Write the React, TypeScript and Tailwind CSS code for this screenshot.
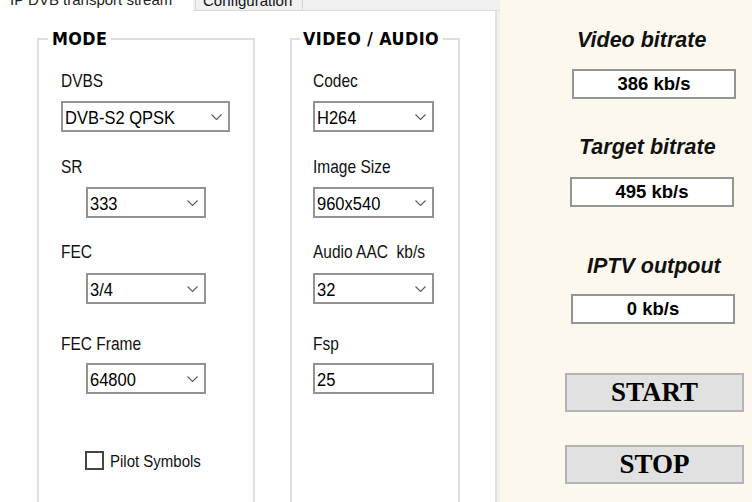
import React from "react";

const Chevron = () => (
  <svg width="11" height="6" viewBox="0 0 11 6" className="shrink-0">
    <path d="M0.5 0.5 L5.5 5.5 L10.5 0.5" fill="none" stroke="#5a5a5a" strokeWidth="1.1" />
  </svg>
);

function Label({ children, className = "" }: { children: React.ReactNode; className?: string }) {
  return (
    <div className={"h-[18px] whitespace-pre text-[15.5px] leading-[18px] text-[#111] " + className}>
      <span className="inline-block scale-y-115">{children}</span>
    </div>
  );
}

function Combo({ value, className = "", arrow = true }: { value: string; className?: string; arrow?: boolean }) {
  return (
    <div
      className={
        "flex h-[31px] shrink-0 items-center justify-between border-2 border-[#939393] bg-white pr-[6px] pl-[2px] " +
        className
      }
    >
      <span className="inline-block scale-y-115 text-[16.5px] leading-[20px] text-black">{value}</span>
      {arrow && <Chevron />}
    </div>
  );
}

function Group({
  title,
  children,
  className = "",
  titleClass = "",
}: {
  title: string;
  children: React.ReactNode;
  className?: string;
  titleClass?: string;
}) {
  return (
    <div className={"relative h-[480px] shrink-0 border-2 border-[#dedede] pt-[32px] " + className}>
      <div
        className={
          "absolute -top-[11px] bg-white font-['DejaVu_Sans',sans-serif] text-[16px] leading-[20px] font-bold tracking-[0.4px] whitespace-nowrap text-black " +
          titleClass
        }
      >
        <span className="inline-block scale-y-115">{title}</span>
      </div>
      <div className="flex flex-col">{children}</div>
    </div>
  );
}

function ValueBox({ value, className = "" }: { value: string; className?: string }) {
  return (
    <div
      className={
        "flex h-[30px] w-[164px] items-center justify-center border-2 border-[#959595] bg-white text-[18.5px] font-bold text-black " +
        className
      }
    >
      {value}
    </div>
  );
}

function ItalicLabel({ children, className = "" }: { children: React.ReactNode; className?: string }) {
  return (
    <div className={"h-[24px] text-[21.5px] leading-[24px] font-bold whitespace-nowrap text-[#111] italic " + className}>
      {children}
    </div>
  );
}

function BigButton({ children, className = "" }: { children: React.ReactNode; className?: string }) {
  return (
    <div
      className={
        "flex h-[39px] w-[179px] items-center justify-center border-2 border-[#b4b4b4] bg-[#e1e1e1] font-['Liberation_Serif',serif] text-[27px] font-bold text-black " +
        className
      }
    >
      {children}
    </div>
  );
}

export default function App() {
  return (
    <div className="flex h-[502px] w-[752px] overflow-hidden font-['Liberation_Sans',Arial,sans-serif]">
      {/* Tab control */}
      <div className="flex w-[500px] shrink-0 flex-col bg-[#f0f0f0]">
        <div className="flex h-[11px] shrink-0 overflow-hidden">
          <div className="w-[193px] shrink-0 bg-white">
            <div className="-mt-[9px] pl-[10px] text-[15px] leading-[18px] whitespace-nowrap text-[#222]">
              IP DVB transport stream
            </div>
          </div>
          <div className="w-[2px] shrink-0 border-b border-[#dcdcdc]" />
          <div className="w-[108px] shrink-0 border-x border-b border-[#d6d6d6] bg-[#f0f0f0]">
            <div className="-mt-[8px] pl-[7px] text-[15px] leading-[18px] whitespace-nowrap text-[#111]">
              Configuration
            </div>
          </div>
          <div className="flex-1 border-b border-[#dcdcdc]" />
        </div>
        <div className="mr-[3px] flex flex-1 gap-[35px] overflow-hidden border-r-2 border-[#e0e0e0] bg-white pt-[27px] pl-[37px]">
          <Group title="MODE" className="w-[218px] pl-[22px]" titleClass="left-[9px] px-[4px]">
            <Label>DVBS</Label>
            <Combo value="DVB-S2 QPSK" className="mt-[11px] w-[169px]" />
            <Label className="mt-[26px]">SR</Label>
            <Combo value="333" className="mt-[11px] ml-[25px] w-[120px]" />
            <Label className="mt-[25px]">FEC</Label>
            <Combo value="3/4" className="mt-[12px] ml-[25px] w-[120px]" />
            <Label className="mt-[31px]">FEC Frame</Label>
            <Combo value="64800" className="mt-[10px] ml-[25px] w-[120px]" />
            <div className="mt-[57px] ml-[24px] flex items-center gap-[6px]">
              <div className="h-[19px] w-[19px] border-2 border-[#444] bg-white" />
              <span className="inline-block scale-y-115 text-[15px] leading-[18px] text-[#111]">Pilot Symbols</span>
            </div>
          </Group>
          <Group title="VIDEO / AUDIO" className="w-[170px] pl-[21px]" titleClass="left-[8px] pr-[4px] pl-[3px]">
            <Label>Codec</Label>
            <Combo value="H264" className="mt-[11px] w-[121px]" />
            <Label className="mt-[26px]">Image Size</Label>
            <Combo value="960x540" className="mt-[11px] w-[121px]" />
            <Label className="mt-[25px]">{"Audio AAC  kb/s"}</Label>
            <Combo value="32" className="mt-[12px] w-[121px]" />
            <Label className="mt-[31px]">Fsp</Label>
            <Combo value="25" className="mt-[10px] w-[121px]" arrow={false} />
          </Group>
        </div>
      </div>

      {/* Right panel */}
      <div className="flex-1 bg-[#fcf8ee] pl-[65px]">
        <div className="flex w-[179px] flex-col pt-[28px]">
          <ItalicLabel className="ml-[12px]">Video bitrate</ItalicLabel>
          <ValueBox value="386 kb/s" className="mt-[17px] ml-[7px]" />
          <ItalicLabel className="mt-[36px] ml-[14px]">Target bitrate</ItalicLabel>
          <ValueBox value="495 kb/s" className="mt-[18px] ml-[5px]" />
          <ItalicLabel className="mt-[47px] ml-[22px]">IPTV outpout</ItalicLabel>
          <ValueBox value="0 kb/s" className="mt-[16px] ml-[6px]" />
          <BigButton className="mt-[49px]">START</BigButton>
          <BigButton className="mt-[33px]">STOP</BigButton>
        </div>
      </div>
    </div>
  );
}
